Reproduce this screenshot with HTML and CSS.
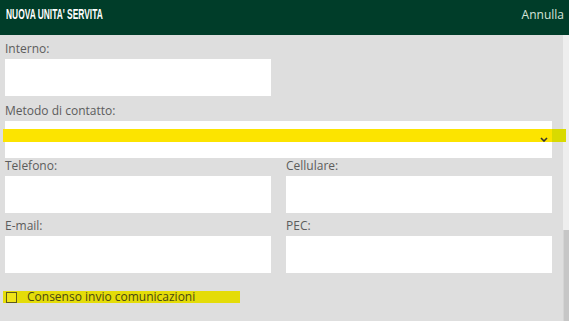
FILE: index.html
```html
<!DOCTYPE html>
<html lang="it">
<head>
    <meta charset="UTF-8">
    <meta name="viewport" content="width=device-width, initial-scale=1.0">
    <title>Nuova unità servita</title>
    <link rel="stylesheet" href="styles.css">
</head>
<body>
    <header class="topbar">
        <h1 class="topbar-title">Nuova unita' servita</h1>
        <a class="topbar-cancel" href="#">Annulla</a>
    </header>
    <div class="panel">
        <form class="unit-form">
            <div class="field field-first">
                <label for="interno">Interno:</label>
                <input type="text" id="interno" name="interno">
            </div>
            <div class="field field-wide field-select">
                <label for="metodo">Metodo di contatto:</label>
                <div class="select-box">
                    <select id="metodo" name="metodo">
                        <option value=""></option>
                    </select>
                    <svg class="chevron" width="8" height="5" viewBox="0 0 8 5"><path d="M1 1l3 3 3-3" fill="none" stroke="#333" stroke-width="1.6"/></svg>
                </div>
            </div>
            <div class="row row-phone">
                <div class="field">
                    <label for="telefono">Telefono:</label>
                    <input type="text" id="telefono" name="telefono">
                </div>
                <div class="field">
                    <label for="cellulare">Cellulare:</label>
                    <input type="text" id="cellulare" name="cellulare">
                </div>
            </div>
            <div class="row row-mail">
                <div class="field">
                    <label for="email">E-mail:</label>
                    <input type="text" id="email" name="email">
                </div>
                <div class="field">
                    <label for="pec">PEC:</label>
                    <input type="text" id="pec" name="pec">
                </div>
            </div>
            <label class="consent" for="consenso">
                <input type="checkbox" id="consenso" name="consenso">
                <span>Consenso invio comunicazioni</span>
            </label>
        </form>
        <div class="scrollbar"><div class="scrollbar-thumb"></div></div>
    </div>
</body>
</html>
```

FILE: styles.css
```css
/* Global */
html, body {
    margin: 0;
    height: 100%;
}
body {
    background-color: #dedede;
    font-family: "Open Sans", "Liberation Sans", sans-serif;
    font-size: 12px;
    color: #5c5c5c;
    display: flex;
    flex-direction: column;
    overflow: hidden;
}
/* Header */
.topbar {
    height: 35px;
    flex-shrink: 0;
    box-sizing: border-box;
    background-color: #003d29;
    display: flex;
    justify-content: space-between;
    align-items: flex-start;
    padding: 6px 5px 0 6px;
}
.topbar-title {
    margin: 0;
    font-family: "Liberation Sans", sans-serif;
    font-weight: bold;
    font-size: 14px;
    line-height: 16px;
    text-transform: uppercase;
    color: #ffffff;
    transform: scaleX(0.6);
    transform-origin: left center;
}
.topbar-cancel {
    color: #d6e4da;
    text-decoration: none;
    font-size: 12px;
    line-height: 14px;
    padding-top: 2px;
}
/* Panel */
.panel {
    flex: 1;
    display: flex;
    min-height: 0;
}
.unit-form {
    flex: 1;
    padding: 6px 11px 0 5px;
}
.field label {
    display: block;
    line-height: 16px;
    margin-bottom: 2px;
}
.field input,
.field select {
    display: block;
    width: 266px;
    height: 37px;
    box-sizing: border-box;
    border: none;
    border-radius: 0;
    background-color: #ffffff;
    margin: 0;
    padding: 0 6px;
    font-family: inherit;
    font-size: 12px;
}
.field-select {
    margin-top: 7px;
}
.field-wide select {
    width: 100%;
    appearance: none;
    -webkit-appearance: none;
}
.select-box {
    position: relative;
}
/* highlighter mark over the select */
.select-box::after {
    content: "";
    position: absolute;
    left: -2px;
    right: -14px;
    top: 8px;
    height: 13px;
    background: linear-gradient(to right, #fce400 0, #fce400 549px, #d9da00 549px);
}
.chevron {
    position: absolute;
    right: 4px;
    top: 16px;
    z-index: 1;
}
.row {
    display: grid;
    grid-template-columns: 266px 266px;
    column-gap: 15px;
}
.row-mail {
    margin-top: 5px;
}
/* Consent */
.consent {
    display: inline-flex;
    align-items: center;
    gap: 10px;
    margin: 18px 0 0 -2px;
    padding: 0 0 0 3px;
    width: 237px;
    height: 12px;
    box-sizing: border-box;
    background-color: #e4dc08;
    color: #4a4814;
    line-height: 12px;
}
.consent input {
    appearance: none;
    -webkit-appearance: none;
    width: 11px;
    height: 11px;
    margin: 0;
    box-sizing: border-box;
    border: 1px solid #5e5a1c;
    background-color: #efe418;
}
/* Fake scrollbar */
.scrollbar {
    width: 6px;
    flex-shrink: 0;
    background-color: #eeeeee;
    display: flex;
    flex-direction: column;
    justify-content: flex-end;
}
.scrollbar-thumb {
    height: 91px;
    background-color: #c6c6c6;
    border-left: 1px solid #d4d4d4;
}
```
